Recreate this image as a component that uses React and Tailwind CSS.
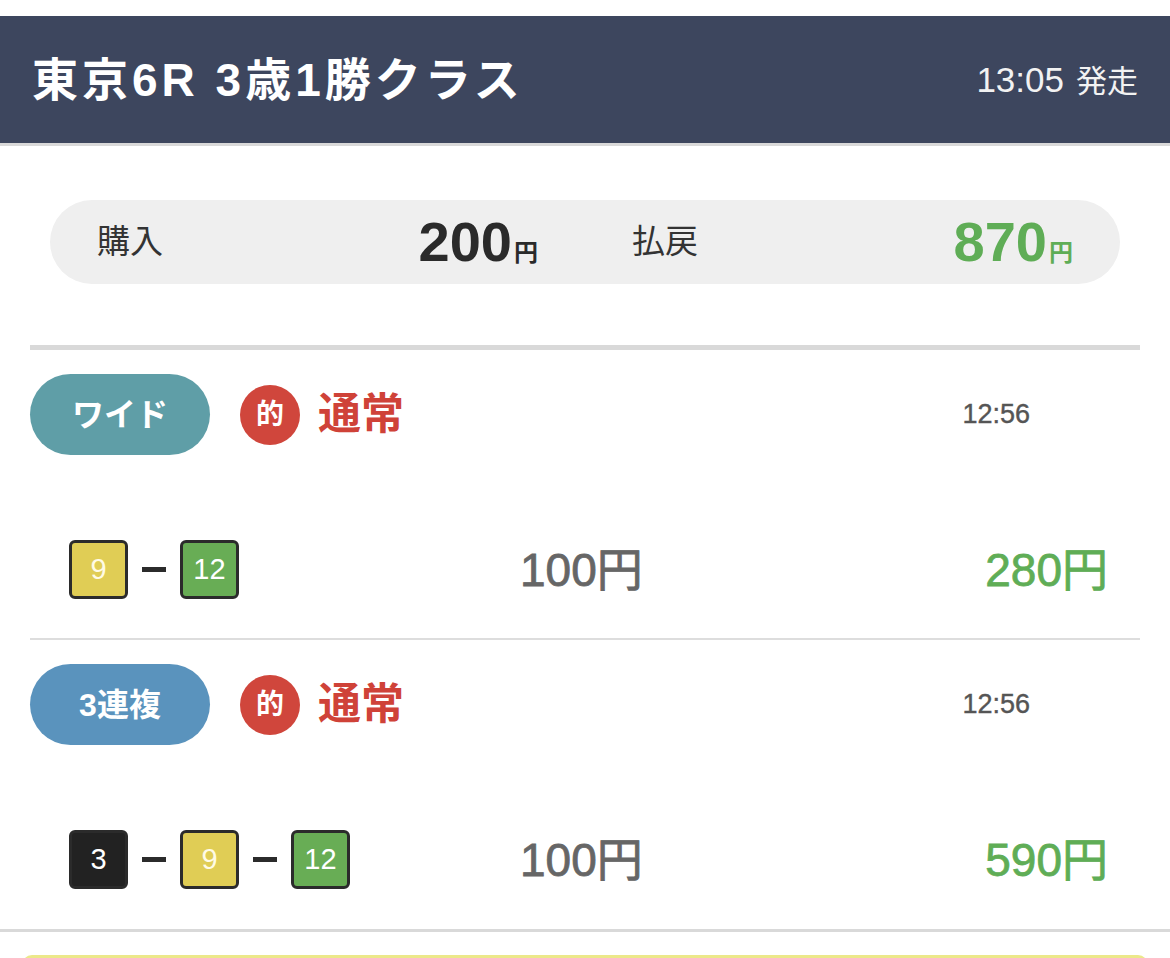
const bets = [
  {
    type: 'ワイド',
    typeColor: 'bg-[#5f9ea7]',
    time: '12:56',
    horses: [
      { no: 9, cls: 'bg-[#e0cd55] text-[#fffbe6]' },
      { no: 12, cls: 'bg-[#68ad55] text-white' },
    ],
    amount: '100円',
    payout: '280円',
  },
  {
    type: '3連複',
    typeColor: 'bg-[#5a93bd]',
    time: '12:56',
    horses: [
      { no: 3, cls: 'bg-[#222222] text-white' },
      { no: 9, cls: 'bg-[#e0cd55] text-[#fffbe6]' },
      { no: 12, cls: 'bg-[#68ad55] text-white' },
    ],
    amount: '100円',
    payout: '590円',
  },
];

function HorseBox({ no, cls }) {
  return (
    <div className={`w-[59px] h-[59px] rounded-[6px] border-[3px] border-[#2b2b2b] flex items-center justify-center text-[29px] leading-none ${cls}`}>
      {no}
    </div>
  );
}

function BetBlock({ bet, last }) {
  return (
    <div className={last ? 'border-b-[3px] border-[#d9d9d9]' : ''}>
      <div className="px-[30px]">
        <div className="flex items-center h-[81px] mt-[24px]">
          <div className={`w-[180px] h-[81px] rounded-full flex items-center justify-center text-white text-[32px] font-bold ${bet.typeColor}`}>
            {bet.type}
          </div>
          <div className="ml-[30px] w-[60px] h-[60px] rounded-full bg-[#d0463c] text-white text-[28px] font-bold flex items-center justify-center">
            的
          </div>
          <span className="ml-[18px] text-[43px] font-bold text-[#cf4238] leading-none">通常</span>
          <span className="ml-auto mr-[110px] text-[27px] text-[#555555] [-webkit-text-stroke:0.4px_#555555]">{bet.time}</span>
        </div>
        <div className={`flex items-center mt-[85px] h-[59px] ${last ? 'mb-[40px]' : 'mb-[39px]'}`}>
          <div className="w-[490px] pl-[39px] flex items-center">
            {bet.horses.map((h, i) => (
              <div key={i} className="flex items-center">
                {i > 0 && <div className="mx-[14px] w-[24px] h-[5px] bg-[#2b2b2b]" />}
                <HorseBox no={h.no} cls={h.cls} />
              </div>
            ))}
          </div>
          <span className="text-[46px] text-[#666666] leading-none [-webkit-text-stroke:0.8px_#666666]">{bet.amount}</span>
          <span className="ml-auto mr-[32px] text-[46px] text-[#5fad56] leading-none [-webkit-text-stroke:0.8px_#5fad56]">{bet.payout}</span>
        </div>
        {!last && <div className="h-[2px] bg-[#dddddd]" />}
      </div>
    </div>
  );
}

export default function App() {
  return (
    <div className="min-h-screen bg-white pt-[16px] font-['Liberation_Sans','Noto_Sans_CJK_JP',sans-serif]">
      <div className="h-[127px] bg-[#3d465e] flex items-center justify-between pl-[32px] pr-[32px]">
        <h1 className="text-[46px] font-bold text-white leading-none tracking-[4px]">東京6R 3歳1勝クラス</h1>
        <span className="flex items-baseline text-[#f2f2f2] leading-none">
          <span className="text-[35px]">13:05</span>
          <span className="ml-[12px] text-[31px]">発走</span>
        </span>
      </div>
      <div className="h-[3px] bg-[#d9d9d9]" />

      <div className="pt-[54px] px-[50px]">
        <div className="h-[84px] rounded-full bg-[#efefef] grid grid-cols-2">
          <div className="flex items-center justify-between px-[47px]">
            <span className="text-[33px] text-[#333333]">購入</span>
            <span className="flex items-baseline text-[#2a2a2a] font-bold">
              <span className="text-[56px] leading-none">200</span>
              <span className="ml-[2px] text-[24px] leading-none">円</span>
            </span>
          </div>
          <div className="flex items-center justify-between px-[47px]">
            <span className="text-[33px] text-[#333333]">払戻</span>
            <span className="flex items-baseline text-[#5fad56] font-bold">
              <span className="text-[56px] leading-none">870</span>
              <span className="ml-[2px] text-[24px] leading-none">円</span>
            </span>
          </div>
        </div>
      </div>

      <div className="mt-[61px] mx-[30px] h-[5px] bg-[#d9d9d9]" />

      {bets.map((bet, i) => (
        <BetBlock key={i} bet={bet} last={i === bets.length - 1} />
      ))}

      <div className="mt-[23px] mx-[22px] h-[200px] rounded-t-[10px] border-t-[3px] border-x-[3px] border-[#ece88a]" />
    </div>
  );
}
